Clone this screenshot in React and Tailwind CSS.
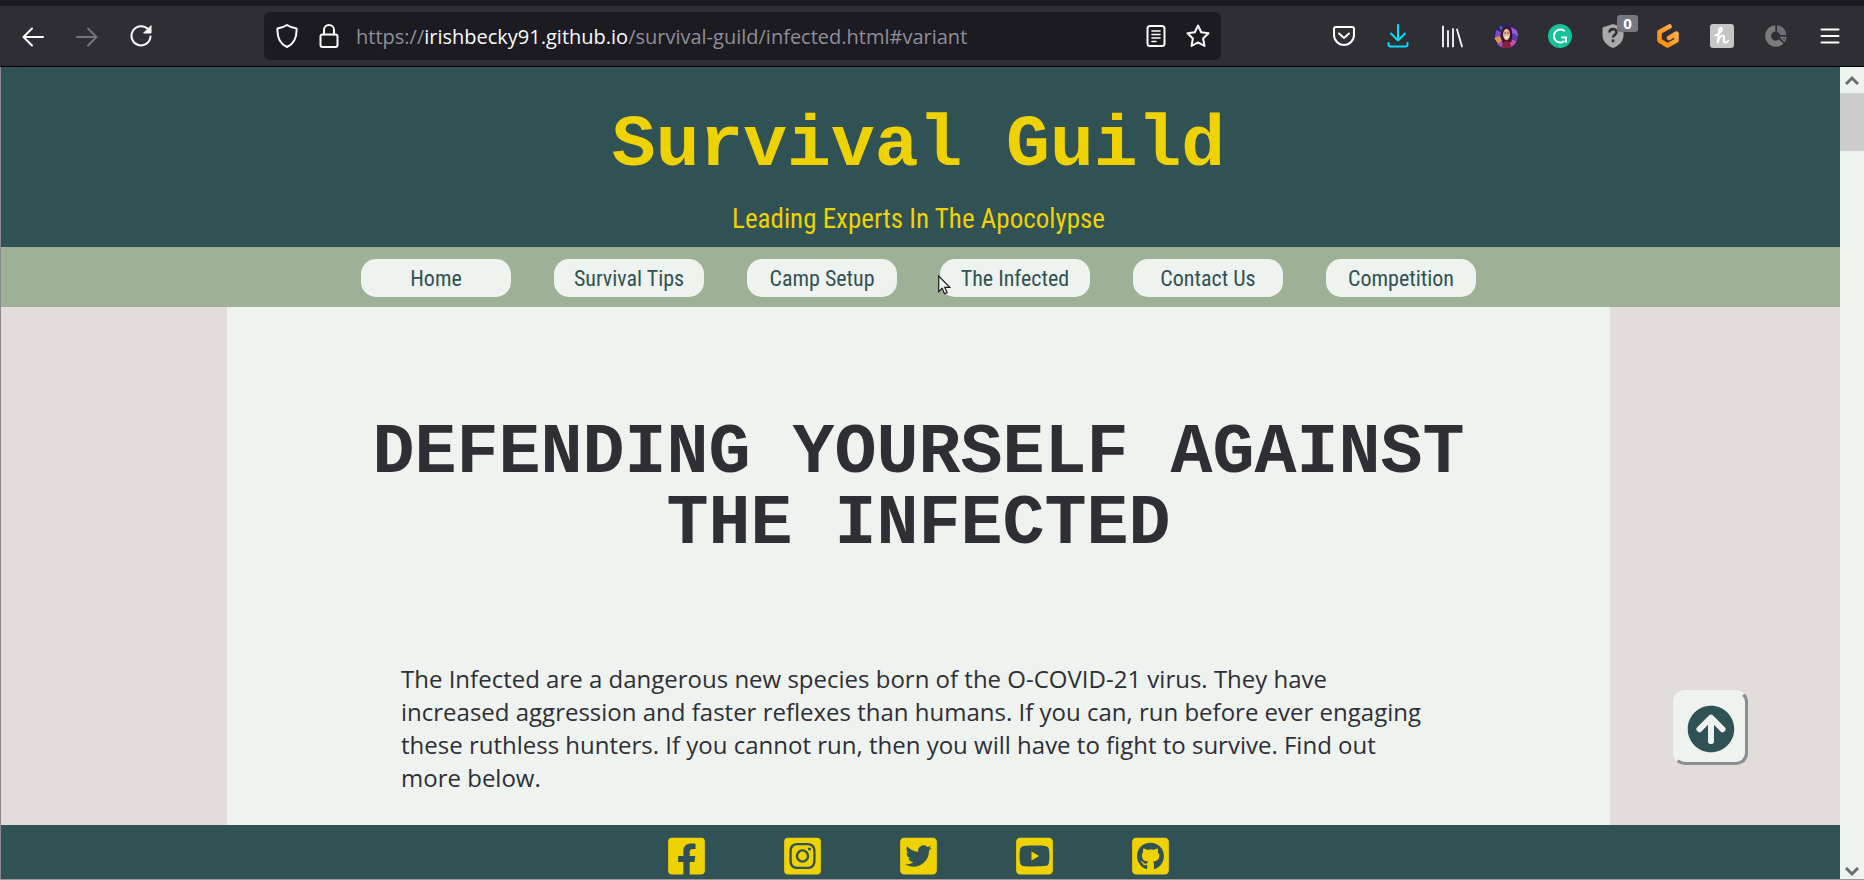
import React from "react";
import {
  FaFacebookSquare,
  FaInstagramSquare,
  FaTwitterSquare,
  FaYoutubeSquare,
  FaGithubSquare,
  FaArrowCircleUp,
} from "react-icons/fa";

const navLinks = ["Home", "Survival Tips", "Camp Setup", "The Infected", "Contact Us", "Competition"];

const socials = [
  { name: "Facebook", Icon: FaFacebookSquare },
  { name: "Instagram", Icon: FaInstagramSquare },
  { name: "Twitter", Icon: FaTwitterSquare },
  { name: "YouTube", Icon: FaYoutubeSquare },
  { name: "GitHub", Icon: FaGithubSquare },
];

function Line({ className = "", children, width = 2 }) {
  return (
    <svg
      viewBox="0 0 24 24"
      className={"size-6 shrink-0 " + className}
      fill="none"
      stroke="currentColor"
      strokeWidth={width}
      strokeLinecap="round"
      strokeLinejoin="round"
      aria-hidden="true"
    >
      {children}
    </svg>
  );
}

function ToolButton({ label, children }) {
  return (
    <button type="button" aria-label={label} className="relative flex h-12 w-[54px] items-center justify-center">
      {children}
    </button>
  );
}

function Extensions() {
  return (
    <div className="flex items-center">
      <ToolButton label="Save to Pocket">
        <Line>
          <path d="M4 3h16a2 2 0 0 1 2 2v6a10 10 0 0 1-20 0V5a2 2 0 0 1 2-2z" />
          <path d="M7 9.500l5 4.500 5-4.500" />
        </Line>
      </ToolButton>
      <ToolButton label="Downloads">
        <Line className="text-[#00ddff]">
          <path d="M12 1v15M5 9.500l7 7 7-7M2.500 19v1.500a2 2 0 0 0 2 2h15a2 2 0 0 0 2-2V19" />
        </Line>
      </ToolButton>
      <ToolButton label="Library">
        <Line width={1.8}>
          <path d="M3 2.500v20M8 7v15.500M13 5v17.500M17 5.500l5 17" />
        </Line>
      </ToolButton>
      <ToolButton label="Account">
        <svg viewBox="0 0 24 24" className="size-6" aria-hidden="true">
          <clipPath id="face"><circle cx="12" cy="12" r="12" /></clipPath>
          <g clipPath="url(#face)">
            <rect width="24" height="24" fill="#33205f" />
            <path d="M2 6l5 2-1 5-5 1z" fill="#7a4fc4" />
            <path d="M5 2l4 1-2 4z" fill="#4a63c9" />
            <path d="M17 3l7 4v5l-5 1z" fill="#a05ad8" />
            <path d="M19 9l5 3-1 5-5-2z" fill="#5e3bb0" />
            <path d="M0 14l6-2 2 5-3 4z" fill="#d9925a" />
            <path d="M3 20l5-3 3 7H4z" fill="#a34fc0" />
            <path d="M17 15l6 2-4 6-5 1z" fill="#c24fae" />
            <path d="M7.500 11c0-10 10.500-10 10.500-1l-.5 8h-9z" fill="#3b1420" />
            <ellipse cx="12.500" cy="10.500" rx="3.500" ry="5.800" fill="#e9b598" />
            <path d="M10.500 9h1.400M13.300 9h1.400" stroke="#4a2320" strokeWidth="1" />
            <path d="M10.500 12.500h4c-.5 2.400-3.500 2.400-4 0z" fill="#fff" />
            <path d="M8 24c0-5 2-7 4.500-7s4.500 2 4.500 7z" fill="#8a1f3c" />
          </g>
        </svg>
      </ToolButton>
      <ToolButton label="Grammarly">
        <svg viewBox="0 0 24 24" className="size-6" aria-hidden="true">
          <circle cx="12" cy="12" r="12" fill="#15c39a" />
          <path d="M16.800 7.200A6.500 6.500 0 1 0 16.500 17M13 13.500h5V18.500" fill="none" stroke="#fff" strokeWidth="2" />
        </svg>
      </ToolButton>
      <ToolButton label="Site privacy">
        <svg viewBox="0 0 24 24" className="size-6" aria-hidden="true">
          <path d="M11 0l10.500 3.500V11c0 6-4 10.500-10.500 13C4.500 21.500.5 17 .5 11V3.500z" fill="#a9a9ab" />
          <path d="M7.500 8.500c0-4.500 7-4.500 7-.3 0 2.800-3.500 2.800-3.500 5.300M11 15.500v2.800" fill="none" stroke="#2f2e35" strokeWidth="2.600" />
        </svg>
        <span className="absolute left-[30px] top-[3px] flex h-[17px] w-[21px] items-center justify-center rounded-[3px] bg-[#777782] font-['Open_Sans',sans-serif] text-[15px] font-bold leading-none text-white">
          0
        </span>
      </ToolButton>
      <ToolButton label="Gitpod">
        <svg viewBox="0 0 24 24" className="size-6" aria-hidden="true">
          <defs>
            <linearGradient id="pod" x1="1" y1="0" x2="0" y2="1">
              <stop offset="0" stopColor="#ffb45b" />
              <stop offset="1" stopColor="#ff8a00" />
            </linearGradient>
          </defs>
          <path d="M13.500 2.500L3.500 8v8.500l8 5 9-5V9.500L13 14" fill="none" stroke="url(#pod)" strokeWidth="4.600" strokeLinecap="round" strokeLinejoin="round" />
        </svg>
      </ToolButton>
      <ToolButton label="Honey">
        <svg viewBox="0 0 24 24" className="size-6" aria-hidden="true">
          <rect width="24" height="24" rx="3" fill="#c6c6c6" />
          <path d="M5.500 11.500c3-1 6.500-4 6.500-6.500 0-1.500-2.500-1.500-2.800.5L7.800 18.500c1-4 2.700-7 5-7 2 0 1.200 2.500.9 4.500-.4 3 2.800 3.500 4.800.5" fill="none" stroke="#fff" strokeWidth="2" strokeLinecap="round" strokeLinejoin="round" />
        </svg>
      </ToolButton>
      <ToolButton label="Usage">
        <svg viewBox="0 0 24 24" className="size-6" aria-hidden="true">
          <path d="M11.300 1.200v6.300a4.600 4.600 0 1 0 3.700 7.700l4.500 4.500A10.800 10.800 0 1 1 11.300 1.200z" fill="#7b7b7e" />
          <path d="M13 1.200a10.600 10.600 0 0 1 9.500 9.800h-6.300A4.500 4.500 0 0 0 13 7.700z" fill="#6f6f73" />
          <path d="M16.500 13.200h5.500a10 10 0 0 1-1.800 4.600z" fill="#54545a" stroke="#85858a" strokeWidth="1" />
        </svg>
      </ToolButton>
      <ToolButton label="Open menu">
        <Line>
          <path d="M3.500 5.500h17M3.500 12h17M3.500 18.500h17" />
        </Line>
      </ToolButton>
    </div>
  );
}

function BrowserBar() {
  return (
    <div className="border-b border-black bg-[#2f2e35] text-[#fbfbfe]">
      <div className="h-1.5 bg-[#1c1b22]" />
      <div className="flex items-center justify-between py-1.5 pl-1.5 pr-[7px]">
        <div className="flex items-center">
          <ToolButton label="Back">
            <Line><path d="M22 13H3M11 4.500L2.500 13l8.500 8.500" /></Line>
          </ToolButton>
          <ToolButton label="Forward">
            <Line className="text-[#74747f]"><path d="M2 13h19M13 4.500l8.500 8.500-8.500 8.500" /></Line>
          </ToolButton>
          <ToolButton label="Reload">
            <Line>
              <path d="M19.500 6A9.500 9.500 0 1 0 21.500 12.500" />
              <path d="M22 2v7h-7z" fill="currentColor" strokeWidth="1" />
            </Line>
          </ToolButton>
        </div>
        <div className="ml-24 mr-24 flex h-12 min-w-0 max-w-[957px] flex-1 items-center rounded-md bg-[#1c1b22] pl-[11px] pr-[11px]">
          <Line><path d="M12 1c3 2 6 3 9.500 3.500C22 13 18.500 20 12 23 5.500 20 2 13 2.500 4.500 6 4 9 3 12 1z" /></Line>
          <Line className="ml-[18px]">
            <rect x="3.500" y="10.500" width="17" height="12.500" rx="2" />
            <path d="M7 10.500V6a5 5 0 0 1 10 0v4.500" />
          </Line>
          <p className="ml-[15px] min-w-0 flex-1 truncate pt-0.5 font-['Open_Sans',sans-serif] text-[20px] leading-8 text-[#8f8f98]">
            https://<span className="text-[#fbfbfe]">irishbecky91.github.io</span>/survival-guild/infected.html#variant
          </p>
          <button type="button" aria-label="Reader view">
            <Line>
              <rect x="3.500" y="2" width="17" height="20" rx="2.500" />
              <path d="M8 7h8M8 10.500h8M8 14h8M8 17.500h4" strokeWidth="1.600" />
            </Line>
          </button>
          <button type="button" aria-label="Bookmark this page" className="ml-[18px]">
            <Line>
              <path d="M12 1.500l3.200 6.800 7.300 1-5.400 5.200 1.400 7.500L12 18.300 5.500 22l1.400-7.500L1.500 9.300l7.300-1z" />
            </Line>
          </button>
        </div>
        <Extensions />
      </div>
    </div>
  );
}

function Cursor() {
  return (
    <svg viewBox="0 0 13 20" className="absolute -left-0.5 top-4 h-5 w-[13px]" aria-hidden="true">
      <path d="M.7 1v15.500l3.500-3.300 2.300 5.600 2.600-1.100-2.300-5.400h5z" fill="#eef3ef" stroke="#1b1b1f" strokeWidth="1.200" />
    </svg>
  );
}

function Scrollbar() {
  return (
    <div className="flex w-6 shrink-0 flex-col items-center bg-[#eef3ef] text-[#6d6d6d]">
      <button type="button" aria-label="Scroll up" className="flex h-[26px] w-full items-center justify-center">
        <svg viewBox="0 0 14 10" className="h-2.5 w-3.5" fill="none" stroke="currentColor" strokeWidth="3" aria-hidden="true"><path d="M1 9l6-6 6 6" /></svg>
      </button>
      <div className="h-[58px] w-full bg-[#cdcdcd]" />
      <button type="button" aria-label="Scroll down" className="mt-auto flex h-3.5 w-full items-center justify-center">
        <svg viewBox="0 0 14 10" className="h-2.5 w-3.5" fill="none" stroke="currentColor" strokeWidth="3" aria-hidden="true"><path d="M1 1l6 6 6-6" /></svg>
      </button>
    </div>
  );
}

export default function App() {
  return (
    <div className="flex min-h-screen flex-col border-b border-[#9a9a9e]">
      <BrowserBar />
      <div className="flex flex-1 border-l border-[#8b8b8f]">
        <div className="flex min-w-0 flex-1 flex-col bg-[#e2dddb]">
          <header className="bg-[#305254] pb-2 pr-1 pt-[38px] text-center text-[#eed202]">
            <p className="font-['Liberation_Mono',monospace] text-[73px] font-bold leading-[82px]">Survival Guild</p>
            <p className="mt-3 font-['Roboto_Condensed','Liberation_Sans_Narrow',sans-serif] text-[27px] leading-10">
              Leading Experts In The Apocolypse
            </p>
          </header>
          <nav aria-label="Main" className="flex justify-center gap-[43px] bg-[#9eb196] pb-2.5 pr-1 pt-3">
            {navLinks.map((label) => (
              <a
                key={label}
                href="#variant"
                className="relative flex h-[38px] w-[150px] items-center justify-center rounded-[15px] bg-[#eef3ef] pt-0.5 font-['Roboto_Condensed','Liberation_Sans_Narrow',sans-serif] text-[22px] leading-8 text-[#305254]"
              >
                {label}
                {label === "The Infected" && <Cursor />}
              </a>
            ))}
          </nav>
          <div className="relative flex flex-1 justify-center pr-1">
            <main className="w-[75.4%] bg-[#eef3ef] px-[9.5%] text-[#2f2e35]">
              <h1 className="-mx-10 pt-[111px] text-center font-['Liberation_Mono',monospace] text-[70px] font-bold uppercase leading-[71px]">
                Defending yourself against the infected
              </h1>
              <p className="mt-[102px] font-['Open_Sans',sans-serif] text-[24px] leading-[33px]">
                The Infected are a dangerous new species born of the O-COVID-21 virus. They have increased aggression
                and faster reflexes than humans. If you can, run before ever engaging these ruthless hunters. If you
                cannot run, then you will have to fight to survive. Find out more below.
              </p>
            </main>
            <a
              href="#top"
              aria-label="Back to top"
              className="absolute bottom-[60px] right-[92px] flex size-[75px] items-center justify-center rounded-xl border-[3px] border-b-[#8c8d90] border-l-[#eef3ef] border-r-[#8c8d90] border-t-[#eef3ef] bg-[#eef3ef] pt-0.5"
            >
              <FaArrowCircleUp className="size-12 text-[#305254]" />
            </a>
          </div>
          <footer className="flex h-[54px] items-center justify-center gap-[79px] bg-[#305254] pr-1 pt-2 text-[#eed202]">
            {socials.map(({ name, Icon }) => (
              <a key={name} href={"#" + name.toLowerCase()} aria-label={name} className="flex w-[37px] justify-center">
                <Icon className="h-[42px] w-[37px]" />
              </a>
            ))}
          </footer>
        </div>
        <Scrollbar />
      </div>
    </div>
  );
}
